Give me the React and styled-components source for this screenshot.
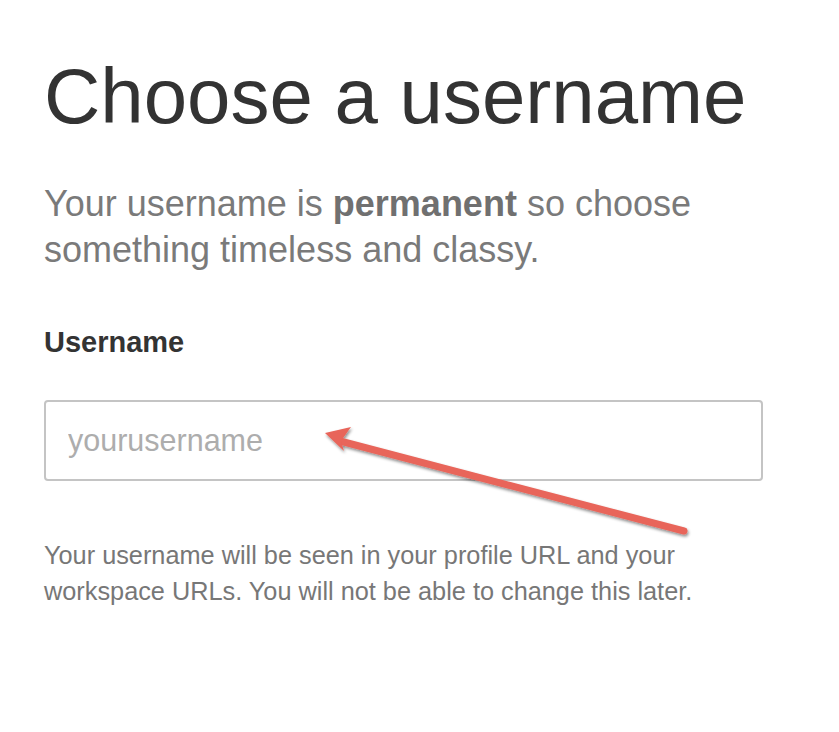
import React from "react";
import styled, { createGlobalStyle } from "styled-components";

const Global = createGlobalStyle`
  html, body { margin: 0; padding: 0; background: #fff; }
  body { font-family: "Liberation Sans", Arial, sans-serif; }
`;

const Page = styled.div`
  position: relative;
  width: 839px;
  height: 732px;
  padding: 56px 0 0 44px;
  box-sizing: border-box;
  display: flex;
  flex-direction: column;
`;

const Title = styled.h1`
  margin: 0;
  font-size: 78px;
  line-height: 80px;
  font-weight: 400;
  color: #333;
`;

const Lead = styled.p`
  margin: 45px 0 0;
  font-size: 36px;
  line-height: 46px;
  color: #7a7a7a;
  width: 720px;
  b { color: #707070; font-weight: 700; }
`;

const Label = styled.label`
  margin-top: 52px;
  font-size: 29px;
  line-height: 34px;
  font-weight: 700;
  color: #333;
`;

const Input = styled.input`
  margin-top: 41px;
  width: 719px;
  height: 81px;
  box-sizing: border-box;
  border: 2px solid #c4c4c4;
  border-radius: 4px;
  padding: 0 22px;
  font-family: "Liberation Sans", Arial, sans-serif;
  font-size: 30.5px;
  color: #333;
  outline: none;
  &::placeholder { color: #adadad; }
`;

const Help = styled.p`
  margin: 56px 0 0;
  font-size: 25.3px;
  line-height: 36px;
  color: #777;
  width: 680px;
`;

const ArrowLayer = styled.svg`
  position: absolute;
  left: 0;
  top: 0;
  pointer-events: none;
  overflow: visible;
`;

function Arrow() {
  return (
    <ArrowLayer width="839" height="732" viewBox="0 0 839 732">
      <defs>
        <filter id="sh" x="-10%" y="-10%" width="120%" height="130%">
          <feDropShadow dx="1" dy="2" stdDeviation="1.4" floodColor="#000" floodOpacity="0.45" />
        </filter>
      </defs>
      <g filter="url(#sh)">
        <line x1="684" y1="531" x2="340" y2="441" stroke="#e8655a" strokeWidth="7" strokeLinecap="round" />
        <polygon points="325,433 351,427 341,441 344,451" fill="#e8655a" />
      </g>
    </ArrowLayer>
  );
}

export default function App() {
  return (
    <Page>
      <Global />
      <Title>Choose a username</Title>
      <Lead>
        Your username is <b>permanent</b> so choose something timeless and classy.
      </Lead>
      <Label htmlFor="u">Username</Label>
      <Input id="u" placeholder="yourusername" />
      <Help>
        Your username will be seen in your profile URL and your workspace URLs. You will not be able to change this later.
      </Help>
      <Arrow />
    </Page>
  );
}
